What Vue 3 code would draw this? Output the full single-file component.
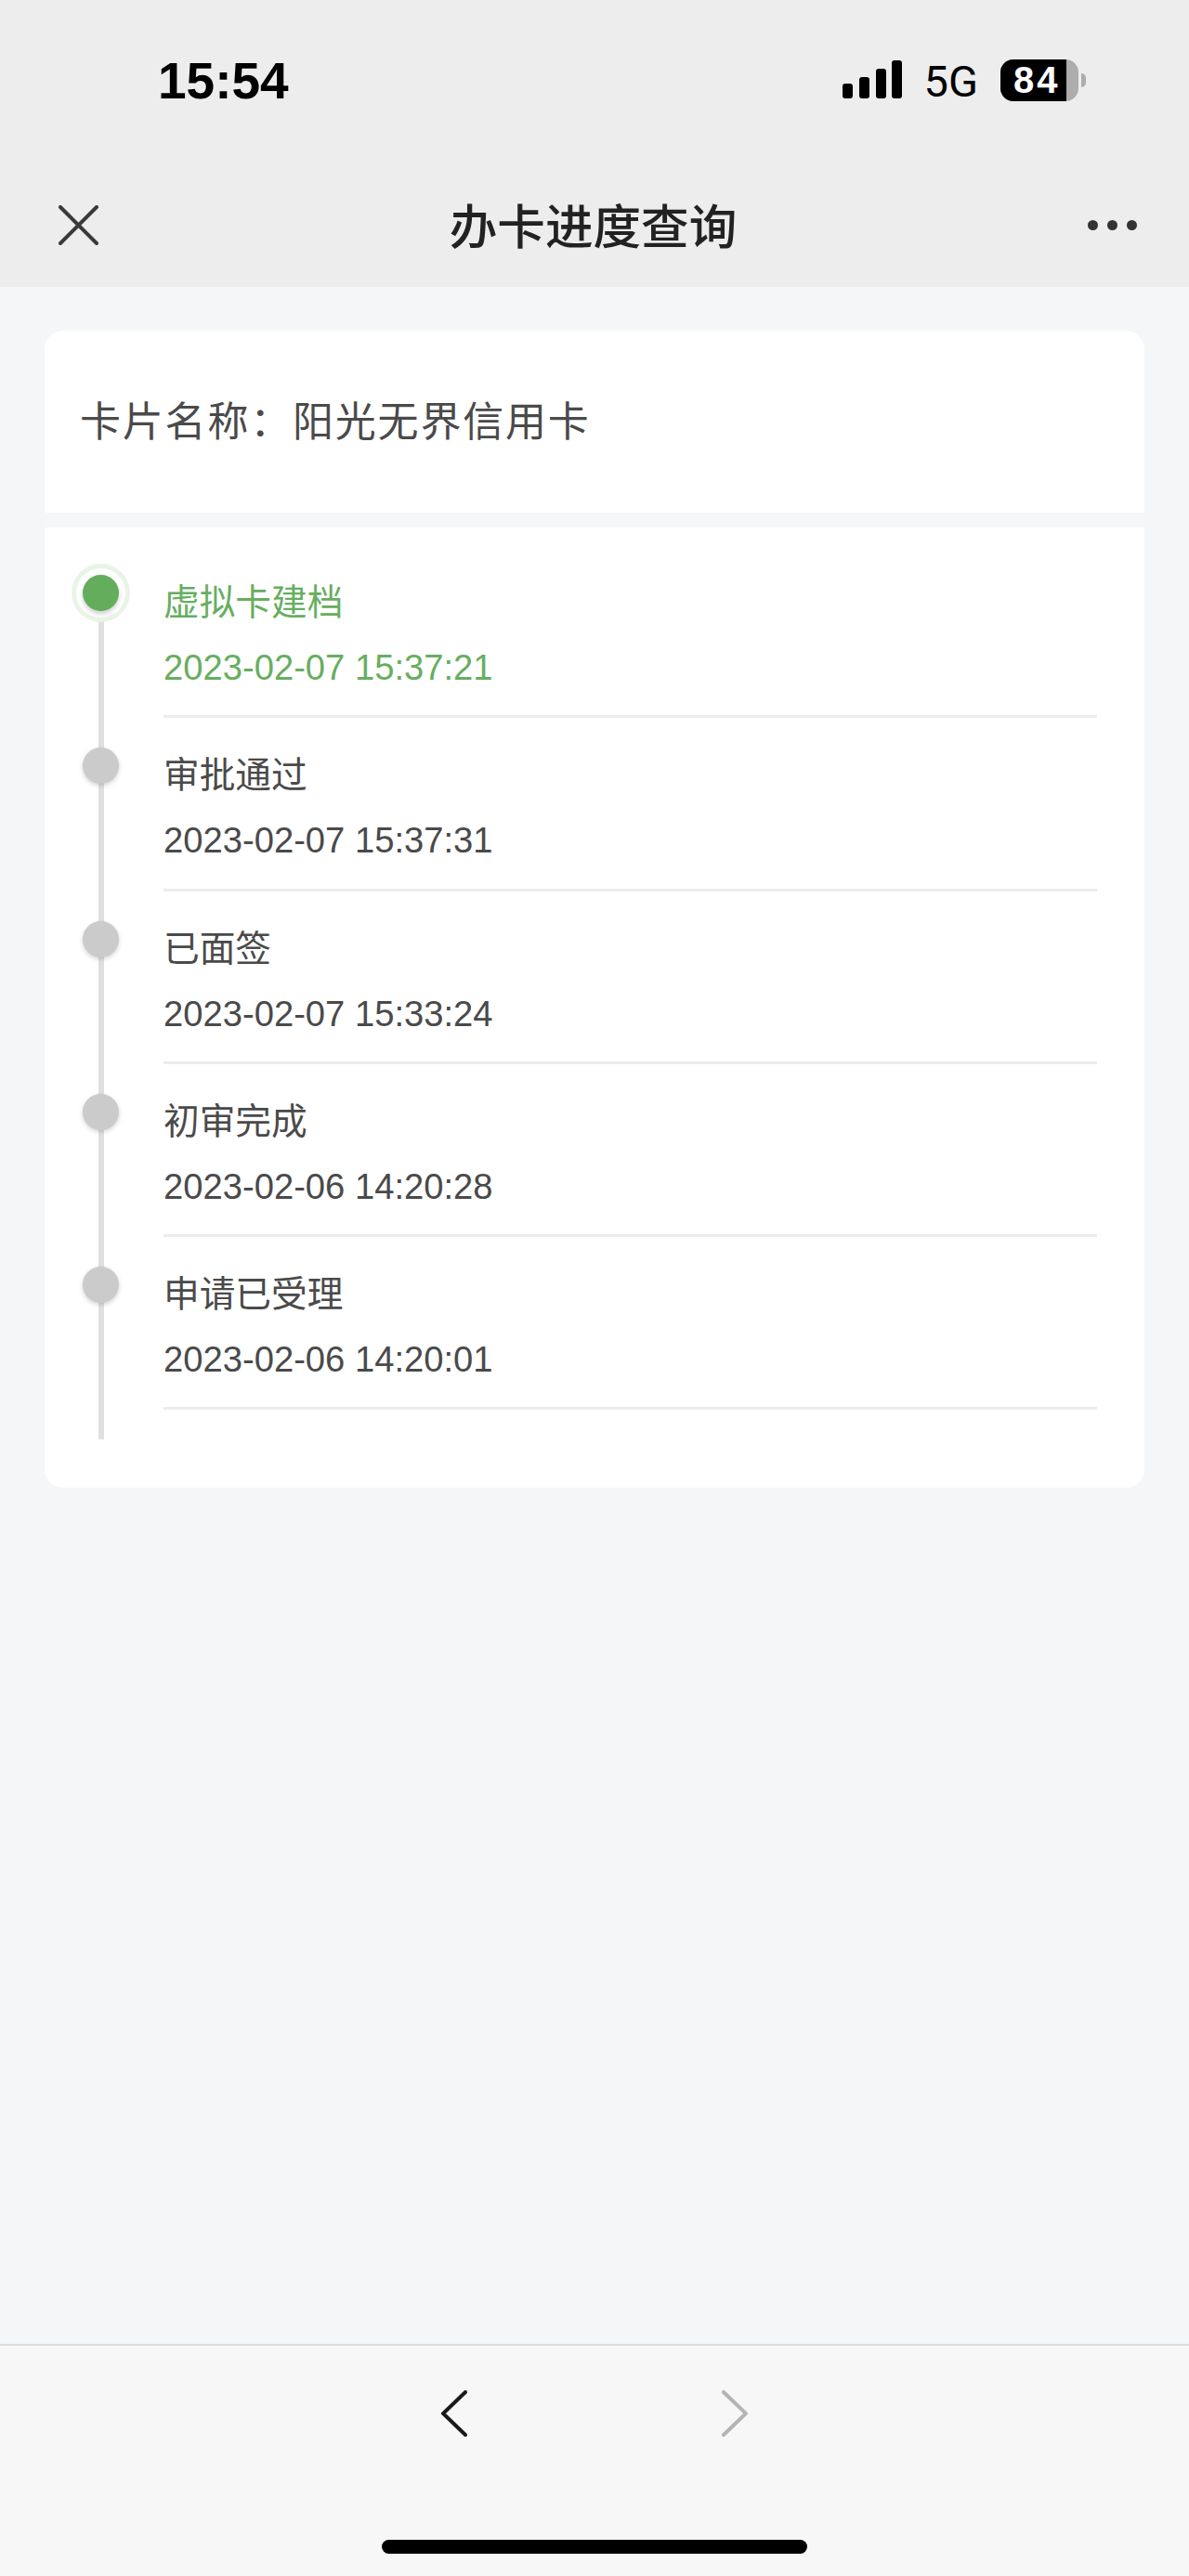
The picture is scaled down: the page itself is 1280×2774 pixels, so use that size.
<template>
  <div class="page">
    <header class="top">
      <div class="status">
        <span class="clock">15:54</span>
        <div class="status-right">
          <svg class="signal" width="64" height="41" viewBox="0 0 64 41">
            <rect x="0" y="25" width="11" height="16" rx="3" />
            <rect x="18" y="18" width="11" height="23" rx="3" />
            <rect x="36" y="9" width="11" height="32" rx="3" />
            <rect x="53" y="0" width="11" height="41" rx="3" />
          </svg>
          <span class="net">5G</span>
          <div class="battery">
            <div class="battery-body">
              <div class="battery-fill" :style="{ width: battery + '%' }"></div>
              <span class="battery-num">{{ battery }}</span>
            </div>
            <div class="battery-cap"></div>
          </div>
        </div>
      </div>
      <nav class="nav">
        <svg class="close" width="43" height="43" viewBox="0 0 43 43">
          <path d="M2 2 L41 41 M41 2 L2 41" />
        </svg>
        <h1 class="nav-title">办卡进度查询</h1>
        <div class="more">
          <i></i><i></i><i></i>
        </div>
      </nav>
    </header>

    <main class="content">
      <section class="card">
        <div class="card-name">卡片名称：阳光无界信用卡</div>
        <ul class="steps">
          <li v-for="(step, i) in steps" :key="step.time" class="step" :class="{ active: i === 0 }">
            <span class="dot"></span>
            <div class="step-body">
              <p class="step-title">{{ step.title }}</p>
              <p class="step-time">{{ step.time }}</p>
            </div>
          </li>
        </ul>
      </section>
    </main>

    <footer class="bottom">
      <div class="arrows">
        <svg class="arrow" width="28" height="50" viewBox="0 0 28 50">
          <path d="M26 2 L2 25 L26 48" />
        </svg>
        <svg class="arrow disabled" width="28" height="50" viewBox="0 0 28 50">
          <path d="M2 2 L26 25 L2 48" />
        </svg>
      </div>
      <div class="home-bar"></div>
    </footer>
  </div>
</template>

<script setup>
import { ref } from 'vue'

const battery = ref(84)

const steps = ref([
  { title: '虚拟卡建档', time: '2023-02-07 15:37:21' },
  { title: '审批通过', time: '2023-02-07 15:37:31' },
  { title: '已面签', time: '2023-02-07 15:33:24' },
  { title: '初审完成', time: '2023-02-06 14:20:28' },
  { title: '申请已受理', time: '2023-02-06 14:20:01' }
])
</script>

<style scoped>
.page {
  height: 2774px;
  display: flex;
  flex-direction: column;
  background: #f5f6f8;
  font-family: "Liberation Sans", "Noto Sans CJK SC", sans-serif;
  color: #4a4a4a;
}

.top {
  height: 309px;
  background: #ededed;
}

.status {
  height: 175px;
  display: flex;
  align-items: center;
  justify-content: space-between;
  padding: 0 111px 0 170px;
}

.clock {
  font-size: 55px;
  font-weight: 700;
  color: #000;
  margin-top: -2px;
}

.status-right {
  display: flex;
  align-items: center;
}

.signal {
  fill: #000;
  margin-right: 24px;
  margin-top: -4px;
}

.net {
  font-family: Roboto, "Liberation Sans", sans-serif;
  font-size: 47px;
  color: #000;
  margin-right: 24px;
  line-height: 50px;
}

.battery {
  display: flex;
  align-items: center;
  margin-top: -3px;
}

.battery-body {
  position: relative;
  width: 84px;
  height: 45px;
  border-radius: 14px;
  background: #adadad;
  overflow: hidden;
}

.battery-fill {
  height: 100%;
  background: #000;
}

.battery-num {
  position: absolute;
  left: 14px;
  top: 0;
  line-height: 45px;
  font-size: 40px;
  font-weight: 700;
  letter-spacing: 3px;
  color: #fff;
}

.battery-cap {
  width: 5px;
  height: 15px;
  margin-left: 3px;
  background: #adadad;
  border-radius: 0 8px 8px 0;
}

.nav {
  height: 134px;
  display: grid;
  grid-template-columns: 1fr auto 1fr;
  align-items: center;
  padding: 0 56px 0 63px;
}

.close {
  fill: none;
  stroke: #3a3a3a;
  stroke-width: 4;
  stroke-linecap: round;
}

.nav-title {
  margin: -3px 10px 0 0;
  font-size: 51.6px;
  font-weight: 500;
  color: #222;
}

.more {
  display: flex;
  justify-content: flex-end;
  gap: 10px;
}

.more i {
  width: 11px;
  height: 11px;
  border-radius: 50%;
  background: #333;
}

.content {
  flex: 1;
  padding: 47px 48px 0;
}

.card {
  background: #fff;
  border-radius: 20px;
  overflow: hidden;
}

.card-name {
  height: 196px;
  display: flex;
  align-items: center;
  padding: 0 0 6px 38px;
  box-sizing: border-box;
  font-size: 44px;
  letter-spacing: 1.8px;
}

.steps {
  position: relative;
  list-style: none;
  margin: 0;
  padding: 19px 51px 84px 128px;
  border-top: 16px solid #f6f7f8;
}

.steps::before {
  content: "";
  position: absolute;
  left: 58px;
  top: 70px;
  bottom: 52px;
  width: 6px;
  background: #e0e0e0;
}

.step {
  position: relative;
  height: 186.25px;
  box-sizing: border-box;
  border-bottom: 3px solid #ececec;
}

.step-body {
  padding-top: 27px;
}

.step-title,
.step-time {
  margin: 0;
  line-height: 70px;
}

.step-title {
  font-size: 38.7px;
}

.step-time {
  font-size: 38.2px;
}

.dot {
  position: absolute;
  left: -87px;
  top: 32px;
  width: 39px;
  height: 39px;
  border-radius: 50%;
  background: #cbcbcb;
  box-shadow: 0 2px 5px rgba(0, 0, 0, 0.18);
}

.step.active .dot {
  background: #64ad5d;
  box-shadow: 0 3px 5px rgba(0, 0, 0, 0.2), 0 0 0 7px #fff, 0 0 0 12px #e9f4e7;
}

.step.active .step-title,
.step.active .step-time {
  color: #67ae5f;
}

.bottom {
  height: 250px;
  box-sizing: border-box;
  border-top: 2px solid #dcdcdc;
  background: #f7f7f8;
  display: flex;
  flex-direction: column;
  align-items: center;
  padding-top: 48px;
}

.arrows {
  display: flex;
  gap: 274px;
}

.arrow {
  fill: none;
  stroke: #1a1a1a;
  stroke-width: 4;
  stroke-linecap: round;
  stroke-linejoin: miter;
}

.arrow.disabled {
  stroke: #b4b4b4;
}

.home-bar {
  width: 458px;
  height: 15px;
  margin-top: 111px;
  border-radius: 8px;
  background: #000;
}
</style>
